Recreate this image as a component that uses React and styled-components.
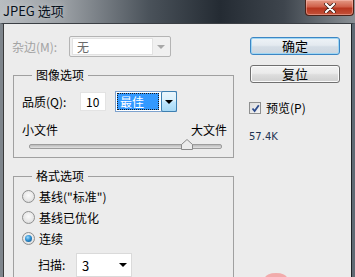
import React from 'react';
import styled, { createGlobalStyle } from 'styled-components';

const Global = createGlobalStyle`
  html, body { margin: 0; padding: 0; background: #ececec; }
  #root { width: 355px; height: 277px; overflow: hidden; }
  * { box-sizing: border-box; }
`;

const Window = styled.div`
  position: relative;
  width: 355px;
  height: 277px;
  display: flex;
  flex-direction: column;
  overflow: hidden;
  font-family: "Noto Sans CJK SC", "Liberation Sans", sans-serif;
  font-size: 12px;
  color: #000;
`;

const TitleBar = styled.div`
  height: 23px;
  flex: none;
  display: flex;
  align-items: center;
  justify-content: space-between;
  padding-left: 3px;
  background: linear-gradient(90deg, #b9bdc1 0%, #9a9fa4 18%, #4a525a 42%, #242b33 62%, #3e454d 80%, #8a9095 100%);
`;

const Title = styled.span`
  font-size: 13px;
  line-height: 23px;
  color: #08111c;
  text-shadow: 0 0 6px rgba(255,255,255,0.55);
  padding-bottom: 2px;
`;

const CloseButton = styled.div`
  align-self: flex-start;
  width: 49px;
  height: 16px;
  margin-right: 1px;
  display: flex;
  align-items: center;
  justify-content: center;
  border: 1px solid #4a2218;
  border-top: none;
  border-radius: 0 0 4px 4px;
  background: linear-gradient(180deg, #e49a86 0%, #d0604a 45%, #b8361f 55%, #c2523a 100%);
  box-shadow: inset 0 0 0 1px rgba(255,200,190,0.45);
`;

const Body = styled.div`
  flex: 1;
  display: flex;
  gap: 16px;
  padding: 12px 0 0 9px;
  background: #ececec;
  border-top: 1px solid #3b3f44;
  border-left: 3px solid #7e858c;
  border-right: 3px solid #5f6a74;
  box-shadow: inset 1px 0 #3a3a3a, inset -1px 0 #1e2226;
`;

const LeftCol = styled.div`
  width: 222px;
  display: flex;
  flex-direction: column;
`;

const RightCol = styled.div`
  width: 91px;
  display: flex;
  flex-direction: column;
  padding-top: 1px;
`;

const Row = styled.div`
  display: flex;
  align-items: center;
  height: ${p => p.$h || 21}px;
`;

const Label = styled.span`
  width: ${p => p.$w ? `${p.$w}px` : 'auto'};
  color: ${p => p.$disabled ? '#a3a3a3' : '#000'};
  white-space: nowrap;
  line-height: 16px;
`;

const DisabledSelect = styled.div`
  width: 102px;
  height: 21px;
  border: 1px solid #b4b4b4;
  border-radius: 2px;
  background: #f0f0f0;
  display: flex;
  align-items: center;
  padding: 2px;
`;

const DisabledValue = styled.div`
  width: 81px;
  height: 17px;
  background: #fff;
  border: 1px solid #e2e2e2;
  color: #6a6a6a;
  padding-left: 4px;
  line-height: 15px;
`;

const ArrowCell = styled.div`
  flex: 1;
  display: flex;
  align-items: center;
  justify-content: center;
`;

const Group = styled.fieldset`
  margin: ${p => p.$mt}px 0 0 1px;
  width: 221px;
  height: ${p => p.$h}px;
  border: 1px solid #a0a0a0;
  padding: ${p => p.$pt}px 6px 0 8px;
  min-inline-size: 0;
`;

const Legend = styled.legend`
  margin-left: 10px;
  padding: 0 4px;
  line-height: 16px;
  font-size: 12px;
`;

const NumberBox = styled.div`
  width: 26px;
  height: 19px;
  background: #fff;
  border: 1px solid #e3e3e3;
  padding-left: 5px;
  line-height: 17px;
`;

const QualitySelect = styled.div`
  margin-left: 9px;
  width: 62px;
  height: 21px;
  display: flex;
  border: 1px solid #7da2ce;
  background: #fff;
  padding: 1px 0 1px 1px;
`;

const Highlight = styled.div`
  width: 42px;
  background: #3399ff;
  color: #fff;
  outline: 1px dotted #1a1a1a;
  outline-offset: -1px;
  padding-left: 3px;
  line-height: 17px;
`;

const DropButton = styled.div`
  margin-left: 2px;
  flex: 1;
  margin-top: -2px;
  margin-bottom: -2px;
  margin-right: -1px;
  border: 1px solid #3c7fb1;
  border-radius: 2px;
  background: linear-gradient(180deg, #eaf6fd 0%, #d9f0fc 45%, #bee6fd 55%, #a7d9f5 100%);
  display: flex;
  align-items: center;
  justify-content: center;
`;

const SizeLabels = styled.div`
  display: flex;
  justify-content: space-between;
  margin-top: 10px;
  line-height: 16px;
`;

const Slider = styled.div`
  position: relative;
  margin: 3px 5px 0 7px;
  height: 10px;
  display: flex;
  align-items: center;
`;

const Track = styled.div`
  width: 100%;
  height: 5px;
  border: 1px solid #9c9c9c;
  border-radius: 2px;
  background: linear-gradient(180deg, #b9b9b9 0%, #e2e2e2 100%);
`;

const Thumb = styled.svg`
  position: absolute;
  top: -2px;
`;

const RadioRow = styled.div`
  display: flex;
  align-items: center;
  height: 21px;
  gap: 4px;
`;

const RadioCircle = styled.div`
  width: 13px;
  height: 13px;
  border-radius: 50%;
  border: 1px solid #8e8f8f;
  background: radial-gradient(circle at 50% 40%, #fbfbfb 0%, #e6e6e6 60%, #cfcfcf 100%);
  display: flex;
  align-items: center;
  justify-content: center;
`;

const RadioDot = styled.div`
  width: 7px;
  height: 7px;
  border-radius: 50%;
  background: radial-gradient(circle at 40% 35%, #9ddcff 0%, #2f8fd0 45%, #0c4a7e 100%);
`;

const ScanRow = styled.div`
  display: flex;
  align-items: center;
  gap: 6px;
  margin-top: 4px;
  padding-left: 16px;
`;

const ScanSelect = styled.div`
  width: 56px;
  height: 24px;
  background: #fff;
  border: 1px solid #dadada;
  display: flex;
  align-items: center;
  justify-content: space-between;
  padding: 0 4px 0 5px;
  font-size: 13px;
`;

const Button = styled.div`
  width: 90px;
  height: 18px;
  margin-bottom: ${p => p.$mb || 0}px;
  display: flex;
  align-items: center;
  justify-content: center;
  font-size: 13px;
  line-height: 16px;
  border-radius: 3px;
  border: 1px solid ${p => p.$primary ? '#3c86c4' : '#707070'};
  background: ${p => p.$primary
    ? 'linear-gradient(180deg, #eef3f7 0%, #e4eaf0 45%, #d4dde6 55%, #cdd6df 100%)'
    : 'linear-gradient(180deg, #f2f2f2 0%, #ebebeb 45%, #dddddd 55%, #cfcfcf 100%)'};
  box-shadow: inset 0 0 0 1px ${p => p.$primary ? '#9fd6f3' : '#fafafa'};
`;

const CheckRow = styled.div`
  display: flex;
  align-items: center;
  gap: 5px;
  margin-left: -1px;
`;

const CheckBox = styled.div`
  width: 12px;
  height: 12px;
  border: 1px solid #8e8f8f;
  background: linear-gradient(135deg, #dcdcdc 0%, #f4f4f4 100%);
  display: flex;
  align-items: center;
  justify-content: center;
`;

const FileSize = styled.div`
  margin-top: 15px;
  margin-left: -1px;
  font-family: "DejaVu Sans", sans-serif;
  font-size: 10px;
  color: #1f3352;
`;

const Blob = styled.div`
  position: absolute;
  left: 265px;
  top: 273px;
  width: 22px;
  height: 10px;
  border-radius: 50%;
  background: rgba(244, 150, 150, 0.75);
`;

const Caret = ({ color = '#000', w = 8 }) => (
  <svg width={w} height={w / 2} viewBox="0 0 8 4"><path d="M0 0h8L4 4z" fill={color} /></svg>
);

export default function App() {
  return (
    <Window>
      <Global />
      <TitleBar>
        <Title>JPEG 选项</Title>
        <CloseButton>
          <svg width="12" height="10" viewBox="0 0 12 10">
            <path d="M2 1l8 8M10 1L2 9" stroke="#3a1a12" strokeWidth="3.6" strokeLinecap="round" />
            <path d="M2 1l8 8M10 1L2 9" stroke="#fff" strokeWidth="2.2" strokeLinecap="round" />
          </svg>
        </CloseButton>
      </TitleBar>
      <Body>
        <LeftCol>
          <Row>
            <Label $w={57} $disabled>杂边(M):</Label>
            <DisabledSelect>
              <DisabledValue>无</DisabledValue>
              <ArrowCell><Caret color="#a8a8a8" /></ArrowCell>
            </DisabledSelect>
          </Row>

          <Group $mt={10} $h={91} $pt={8}>
            <Legend>图像选项</Legend>
            <Row>
              <Label $w={58}>品质(Q):</Label>
              <NumberBox>10</NumberBox>
              <QualitySelect>
                <Highlight>最佳</Highlight>
                <DropButton><Caret /></DropButton>
              </QualitySelect>
            </Row>
            <SizeLabels>
              <span>小文件</span>
              <span>大文件</span>
            </SizeLabels>
            <Slider>
              <Track />
              <Thumb width="12" height="11" viewBox="0 0 12 11" style={{ left: 152 }}>
                <path d="M0.5 10.5V5.5L6 0.5L11.5 5.5V10.5Z" fill="#ececec" stroke="#8a8a8a" />
              </Thumb>
            </Slider>
          </Group>

          <Group $mt={10} $h={130} $pt={2}>
            <Legend>格式选项</Legend>
            <RadioRow><RadioCircle /><span>基线("标准")</span></RadioRow>
            <RadioRow><RadioCircle /><span>基线已优化</span></RadioRow>
            <RadioRow><RadioCircle><RadioDot /></RadioCircle><span>连续</span></RadioRow>
            <ScanRow>
              <Label $w={32}>扫描:</Label>
              <ScanSelect>
                <span>3</span>
                <Caret />
              </ScanSelect>
            </ScanRow>
          </Group>
        </LeftCol>

        <RightCol>
          <Button $primary $mb={10}>确定</Button>
          <Button $mb={17}>复位</Button>
          <CheckRow>
            <CheckBox>
              <svg width="9" height="9" viewBox="0 0 9 9">
                <path d="M1.5 4.5L3.6 7L7.8 1.2" stroke="#2c4b8c" strokeWidth="1.8" fill="none" />
              </svg>
            </CheckBox>
            <Label>预览(P)</Label>
          </CheckRow>
          <FileSize>57.4K</FileSize>
        </RightCol>
      </Body>
      <Blob />
    </Window>
  );
}
